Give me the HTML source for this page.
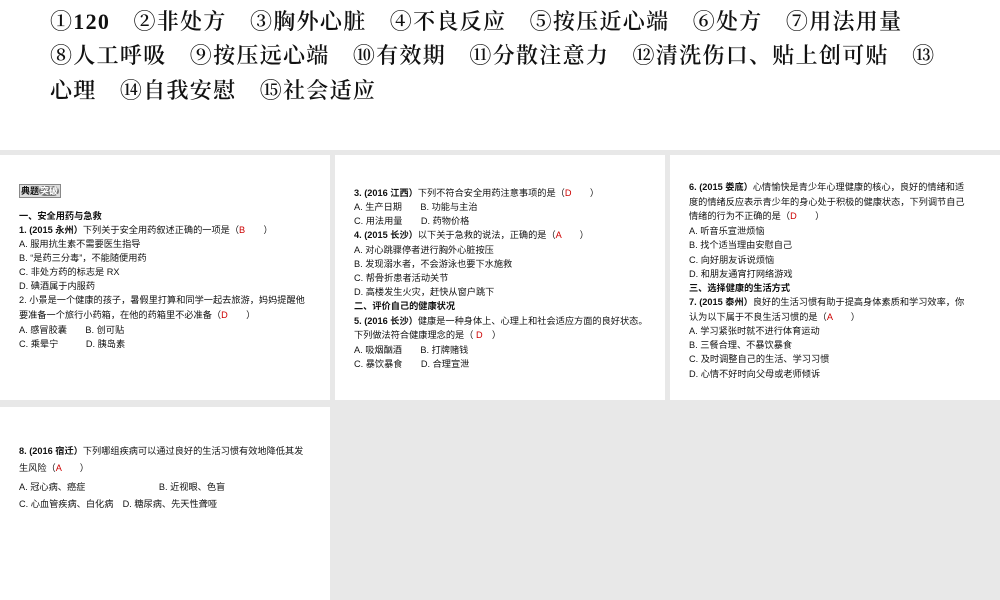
<!DOCTYPE html>
<html><head><meta charset="utf-8"><style>
*{margin:0;padding:0;box-sizing:border-box}
body{width:1000px;height:600px;position:relative;background:#e8e8e8;overflow:hidden;font-family:"Liberation Sans","Noto Sans CJK SC",sans-serif}
.top{position:absolute;left:0;top:0;width:1000px;height:150px;background:#fff}
.top div{position:absolute;left:50px;font-family:"Liberation Serif","Noto Serif CJK SC",serif;font-size:22px;font-weight:600;color:#111;white-space:nowrap;letter-spacing:1.3px}
.p{position:absolute;background:#fff;font-size:9.2px;color:#111}
.p div{position:absolute;left:19px;white-space:nowrap;line-height:12px}
.r{color:#c00}
b{font-weight:bold}
.badge{display:inline-block;border:1px solid #888;background:#ddd;padding:0 1px;font-size:9px;font-weight:bold}
.badge i{font-style:normal;background:#777;color:#fff;border-radius:6px;padding:0 1px}
</style></head><body>
<div class="top">
<div style="top:5px">①120　②非处方　③胸外心脏　④不良反应　⑤按压近心端　⑥处方　⑦用法用量</div>
<div style="top:39px">⑧人工呼吸　⑨按压远心端　⑩有效期　⑪分散注意力　⑫清洗伤口、贴上创可贴　⑬</div>
<div style="top:74px">心理　⑭自我安慰　⑮社会适应</div>
</div>
<div class="p" style="left:0;top:155px;width:330px;height:245px">
<div style="top:29px"><span class="badge">典题<i>突破</i></span></div>
<div style="top:55px"><b>一、安全用药与急救</b></div>
<div style="top:69px"><b>1. (2015 永州）</b>下列关于安全用药叙述正确的一项是（<span class="r">B</span>　　）</div>
<div style="top:83px">A. 服用抗生素不需要医生指导</div>
<div style="top:97px">B. “是药三分毒”，不能随便用药</div>
<div style="top:111px">C. 非处方药的标志是 RX</div>
<div style="top:125px">D. 碘酒属于内服药</div>
<div style="top:139px">2. 小景是一个健康的孩子，暑假里打算和同学一起去旅游，妈妈提醒他</div>
<div style="top:154px">要准备一个旅行小药箱，在他的药箱里不必准备（<span class="r">D</span>　　）</div>
<div style="top:169px">A. 感冒胶囊　　B. 创可贴</div>
<div style="top:183px">C. 乘晕宁　　　D. 胰岛素</div>
</div>
<div class="p" style="left:335px;top:155px;width:330px;height:245px">
<div style="top:32px"><b>3. (2016 江西）</b>下列不符合安全用药注意事项的是（<span class="r">D</span>　　）</div>
<div style="top:46px">A. 生产日期　　B. 功能与主治</div>
<div style="top:60px">C. 用法用量　　D. 药物价格</div>
<div style="top:74px"><b>4. (2015 长沙）</b>以下关于急救的说法，正确的是（<span class="r">A</span>　　）</div>
<div style="top:89px">A. 对心跳骤停者进行胸外心脏按压</div>
<div style="top:103px">B. 发现溺水者，不会游泳也要下水施救</div>
<div style="top:117px">C. 帮骨折患者活动关节</div>
<div style="top:131px">D. 高楼发生火灾，赶快从窗户跳下</div>
<div style="top:145px"><b>二、评价自己的健康状况</b></div>
<div style="top:160px"><b>5. (2016 长沙）</b>健康是一种身体上、心理上和社会适应方面的良好状态。</div>
<div style="top:174px">下列做法符合健康理念的是（ <span class="r">D</span>　）</div>
<div style="top:189px">A. 吸烟酗酒　　B. 打牌赌钱</div>
<div style="top:203px">C. 暴饮暴食　　D. 合理宣泄</div>
</div>
<div class="p" style="left:670px;top:155px;width:330px;height:245px">
<div style="top:26px"><b>6. (2015 娄底）</b>心情愉快是青少年心理健康的核心，良好的情绪和适</div>
<div style="top:41px">度的情绪反应表示青少年的身心处于积极的健康状态，下列调节自己</div>
<div style="top:55px">情绪的行为不正确的是（<span class="r">D</span>　　）</div>
<div style="top:70px">A. 听音乐宣泄烦恼</div>
<div style="top:84px">B. 找个适当理由安慰自己</div>
<div style="top:99px">C. 向好朋友诉说烦恼</div>
<div style="top:113px">D. 和朋友通宵打网络游戏</div>
<div style="top:127px"><b>三、选择健康的生活方式</b></div>
<div style="top:141px"><b>7. (2015 泰州）</b>良好的生活习惯有助于提高身体素质和学习效率，你</div>
<div style="top:156px">认为以下属于不良生活习惯的是（<span class="r">A</span>　　）</div>
<div style="top:170px">A. 学习紧张时就不进行体育运动</div>
<div style="top:184px">B. 三餐合理、不暴饮暴食</div>
<div style="top:198px">C. 及时调整自己的生活、学习习惯</div>
<div style="top:213px">D. 心情不好时向父母或老师倾诉</div>
</div>
<div class="p" style="left:0;top:407px;width:330px;height:193px">
<div style="top:38px"><b>8. (2016 宿迁）</b>下列哪组疾病可以通过良好的生活习惯有效地降低其发</div>
<div style="top:55px">生风险（<span class="r">A</span>　　）</div>
<div style="top:74px">A. 冠心病、癌症　　　　　　　　B. 近视眼、色盲</div>
<div style="top:91px">C. 心血管疾病、白化病　D. 糖尿病、先天性聋哑</div>
</div>
</body></html>
